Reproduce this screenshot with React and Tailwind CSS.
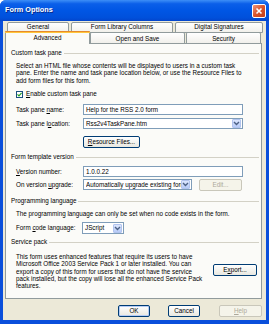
import React from "react";

function U({ children }) {
  return <span className="underline underline-offset-[1px]">{children}</span>;
}

function Arrow() {
  return (
    <div className="w-[9px] h-[9px] mr-px shrink-0 rounded-[1px] bg-[linear-gradient(#DCE6FD,#B7CBF7)] border border-[#B2C4EE] flex items-center justify-center">
      <svg width="7" height="5" viewBox="0 0 7 5">
        <path d="M1 1 L3.5 3.5 L6 1" stroke="#4D6185" strokeWidth="1.4" fill="none" />
      </svg>
    </div>
  );
}

function Header({ children }) {
  return (
    <div className="flex items-center h-[10px] pl-[5px] pr-[2px]">
      <span className="whitespace-nowrap">{children}</span>
      <div className="flex-1 h-px bg-[#D3D1C6] ml-[2px]" />
    </div>
  );
}

function Btn({ children, className, disabled }) {
  return (
    <div
      className={
        "h-[12px] rounded-[2px] border flex items-center justify-center " +
        (disabled
          ? "border-[#C9C7BA] text-[#ACA899] bg-[#F5F4EA] "
          : "border-[#003C74] bg-[linear-gradient(#FFFFFF,#E9E8E0)] ") +
        className
      }
    >
      {children}
    </div>
  );
}

export default function App() {
  return (
    <div className="w-[269px] h-[324px] flex flex-col bg-[#0A4FDB] rounded-t-[6px] font-['Liberation_Sans',Arial,sans-serif] text-[6.3px] text-black overflow-hidden">
      {/* title bar */}
      <div className="h-[21px] shrink-0 flex items-center pl-[5px] pr-[3px] bg-[linear-gradient(180deg,#3D8FF7_0%,#0B5FE9_18%,#0056E4_50%,#0050DB_85%,#0345CB_100%)]">
        <span className="flex-1 text-white font-bold text-[7.3px] [text-shadow:1px_1px_0_#0A2A8A]">Form Options</span>
        <div className="w-[14px] h-[14px] rounded-[2px] border border-white bg-[linear-gradient(135deg,#F0957A,#D9542C_50%,#C23E17)] flex items-center justify-center">
          <svg width="8" height="8" viewBox="0 0 8 8">
            <path d="M1.5 1.5 L6.5 6.5 M6.5 1.5 L1.5 6.5" stroke="white" strokeWidth="1.6" />
          </svg>
        </div>
      </div>

      {/* body */}
      <div className="flex-1 mx-[3px] mb-[4px] bg-[#ECE9D8] flex flex-col">
        {/* tab row 1 */}
        <div className="mt-px h-[11px] flex pl-[4px] gap-[2px]">
          <div className="w-[62px] h-[11px] border border-[#919B9C] rounded-t-[2px] bg-[linear-gradient(#FFFFFF,#F1F0EB)] flex items-center justify-center pb-px">General</div>
          <div className="w-[102px] h-[11px] border border-[#919B9C] rounded-t-[2px] bg-[linear-gradient(#FFFFFF,#F1F0EB)] flex items-center justify-center pb-px">Form Library Columns</div>
          <div className="w-[88px] h-[11px] border border-[#919B9C] rounded-t-[2px] bg-[linear-gradient(#FFFFFF,#F1F0EB)] flex items-center justify-center pb-px">Digital Signatures</div>
        </div>
        {/* tab row 2 */}
        <div className="-mt-[2px] h-[12px] flex items-start pl-[2px]">
          <div className="relative z-10 w-[85px] h-[13px] border-x border-[#919B9C] bg-[#FBFBF8] rounded-t-[2px] flex flex-col">
            <div className="h-[1px] bg-[#E68B2C] -mx-px rounded-t-[2px]" />
            <div className="h-[2px] bg-[#FFC73C] -mx-px" />
            <div className="flex-1 flex items-center justify-center pb-[2px]">Advanced</div>
          </div>
          <div className="mt-px w-[95px] h-[11px] border border-[#919B9C] border-b-0 rounded-t-[2px] bg-[linear-gradient(#FFFFFF,#F1F0EB)] flex items-center justify-center pt-[1px]">Open and Save</div>
          <div className="mt-px ml-px w-[75px] h-[11px] border border-[#919B9C] border-b-0 rounded-t-[2px] bg-[linear-gradient(#FFFFFF,#F1F0EB)] flex items-center justify-center pt-[1px]">Security</div>
        </div>

        {/* panel */}
        <div className="ml-[2px] w-[257px] h-[256px] border border-[#919B9C] bg-[#FBFBF8] flex flex-col">
          <div className="mt-[4px]">
            <Header>Custom task pane</Header>
          </div>
          <div className="mt-[4px] h-[22px] pl-[10px] leading-[7.25px] whitespace-nowrap">
            Select an HTML file whose contents will be displayed to users in a custom task
            <br />
            pane. Enter the name and task pane location below, or use the Resource Files to
            <br />
            add form files for this form.
          </div>
          <div className="mt-[5px] h-[10px] pl-[10px] flex items-center">
            <div className="w-[7px] h-[7px] border border-[#1C5180] bg-white flex items-center justify-center">
              <svg width="5" height="5" viewBox="0 0 5 5">
                <path d="M0.5 2.3 L2 3.8 L4.6 0.8" stroke="#21A121" strokeWidth="1.2" fill="none" />
              </svg>
            </div>
            <span className="ml-[3px]">
              <U>E</U>nable custom task pane
            </span>
          </div>
          <div className="mt-[5px] h-[11px] pl-[10px] flex items-center">
            <span className="w-[67px]">
              Task pane <U>n</U>ame:
            </span>
            <div className="w-[160px] h-[11px] border border-[#7F9DB9] bg-white flex items-center pl-[2px]">
              Help for the RSS 2.0 form
            </div>
          </div>
          <div className="mt-[3px] h-[11px] pl-[10px] flex items-center">
            <span className="w-[67px]">
              Task pane l<U>o</U>cation:
            </span>
            <div className="w-[160px] h-[11px] border border-[#7F9DB9] bg-white flex items-center pl-[2px]">
              <span className="flex-1">Rss2v4TaskPane.htm</span>
              <Arrow />
            </div>
          </div>
          <div className="mt-[7px] h-[12px] pl-[77px] flex">
            <Btn className="w-[57px]">
              <U>R</U>esource Files...
            </Btn>
          </div>
          <div className="mt-[4px]">
            <Header>Form template version</Header>
          </div>
          <div className="mt-[4px] h-[11px] pl-[10px] flex items-center">
            <span className="w-[67px]">
              <U>V</U>ersion number:
            </span>
            <div className="w-[160px] h-[11px] border border-[#7F9DB9] bg-white flex items-center pl-[2px]">1.0.0.22</div>
          </div>
          <div className="mt-[2px] h-[11px] pl-[10px] flex items-center">
            <span className="w-[67px]">
              On version <U>u</U>pgrade:
            </span>
            <div className="w-[109px] h-[11px] border border-[#7F9DB9] bg-white flex items-center pl-[2px]">
              <span className="flex-1 overflow-hidden whitespace-nowrap">Automatically upgrade existing forms</span>
              <Arrow />
            </div>
            <Btn disabled className="ml-[7px] w-[43px] h-[11px]">
              Edit...
            </Btn>
          </div>
          <div className="mt-[6px]">
            <Header>Programming language</Header>
          </div>
          <div className="mt-[3px] h-[9px] pl-[10px] flex items-center whitespace-nowrap">
            The programming language can only be set when no code exists in the form.
          </div>
          <div className="mt-[4px] h-[12px] pl-[10px] flex items-center">
            <span className="w-[66px]">
              Form <U>c</U>ode language:
            </span>
            <div className="w-[42px] h-[12px] border border-[#7F9DB9] bg-white flex items-center pl-[2px]">
              <span className="flex-1">JScript</span>
              <Arrow />
            </div>
          </div>
          <div className="mt-[3px]">
            <Header>Service pack</Header>
          </div>
          <div className="mt-[6px] pl-[10px] flex">
            <div className="w-[197px] leading-[7.25px] whitespace-nowrap">
              This form uses enhanced features that require its users to have
              <br />
              Microsoft Office 2003 Service Pack 1 or later installed. You can
              <br />
              export a copy of this form for users that do not have the service
              <br />
              pack installed, but the copy will lose all the enhanced Service Pack
              <br />
              features.
            </div>
            <div className="pt-[11px]">
              <Btn className="w-[44px] h-[12px]">
                E<U>x</U>port...
              </Btn>
            </div>
          </div>
        </div>

        {/* bottom buttons */}
        <div className="mt-[6px] h-[12px] flex pl-[115px]">
          <Btn className="w-[32px] border-[#2C55B0] shadow-[inset_0_0_0_1px_#B5CCF5]">OK</Btn>
          <Btn className="ml-[18px] w-[32px]">Cancel</Btn>
          <Btn disabled className="ml-[19px] w-[43px]">
            <U>H</U>elp
          </Btn>
        </div>
      </div>
    </div>
  );
}
